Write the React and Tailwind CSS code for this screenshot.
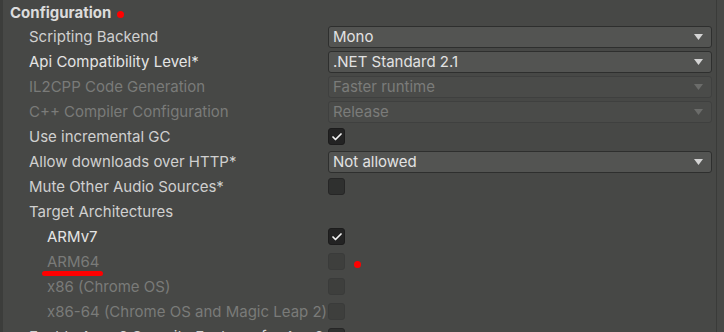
import { Check } from 'lucide-react';

const font = { fontFamily: 'Inter, "Noto Sans", sans-serif' };

const Dropdown = ({ value, disabled }) => (
  <div className={`flex h-[22px] w-[384px] items-center justify-between rounded-[3px] border pl-[4px] pr-[8px] ${disabled ? 'border-[#3f403f] bg-[#4a4b49] text-[#7b7c7a]' : 'border-[#2e2f2e] bg-[#535452] text-[#e2e2e2]'}`}>
    <span className="text-[15px] leading-none">{value}</span>
    <svg width="9" height="6" viewBox="0 0 9 6">
      <path d="M0 0h9L4.5 6z" fill={disabled ? '#6b6c6a' : '#d4d4d4'} />
    </svg>
  </div>
);

const Checkbox = ({ checked, disabled }) => (
  <div className={`flex h-[17px] w-[17px] items-center justify-center rounded-[3px] border ${disabled ? 'border-[#3a3b3a] bg-[#3e3f3d]' : checked ? 'border-[#1c1c1c] bg-[#232323]' : 'border-[#262626] bg-[#2f302f]'}`}>
    {checked && <Check size={12} strokeWidth={3.5} className="text-[#f2f2f2]" />}
  </div>
);

const Row = ({ label, sub, tone = 'normal', children }) => {
  const color = tone === 'disabled' ? 'text-[#7a7b79]' : tone === 'bright' ? 'text-[#e4e4e4]' : 'text-[#d0d0d0]';
  return <div className="flex h-[25px] items-center">
    <div className={`w-[325px] shrink-0 whitespace-nowrap text-[15px] leading-none ${sub ? 'pl-[44px]' : 'pl-[26px]'} ${color}`}>{label}</div>
    {children}
  </div>;
};

export default function App() {
  return <div style={font} className="relative flex h-[332px] w-[724px] overflow-hidden bg-[#474846]">
    <div className="w-[3px] shrink-0 bg-[#3c3d3b]" />
    <div className="flex-1 pt-[2px]">
      <div className="flex h-[22px] items-center pl-[7px] text-[15px] font-bold text-[#dcdcdc]">Configuration</div>
      <Row label="Scripting Backend"><Dropdown value="Mono" /></Row>
      <Row label="Api Compatibility Level*" tone="bright"><Dropdown value=".NET Standard 2.1" /></Row>
      <Row label="IL2CPP Code Generation" tone="disabled"><Dropdown value="Faster runtime" disabled /></Row>
      <Row label="C++ Compiler Configuration" tone="disabled"><Dropdown value="Release" disabled /></Row>
      <Row label="Use incremental GC"><Checkbox checked /></Row>
      <Row label="Allow downloads over HTTP*"><Dropdown value="Not allowed" /></Row>
      <Row label="Mute Other Audio Sources*"><Checkbox /></Row>
      <Row label="Target Architectures" />
      <Row label="ARMv7" sub tone="bright"><Checkbox checked /></Row>
      <Row label="ARM64" sub tone="disabled"><Checkbox disabled /></Row>
      <Row label="x86 (Chrome OS)" sub tone="disabled"><Checkbox disabled /></Row>
      <Row label="x86-64 (Chrome OS and Magic Leap 2)" sub tone="disabled"><Checkbox disabled /></Row>
      <Row label="Enable Armv9 Security Features for Arm64"><Checkbox /></Row>
    </div>
    <div className="w-[8px] shrink-0 border-l border-[#3a3b39]" />
    <div className="absolute left-[117px] top-[11px] h-[7px] w-[7px] rounded-full bg-[#ff0000]" />
    <div className="absolute left-[354px] top-[261px] h-[7px] w-[7px] rounded-full bg-[#ff0000]" />
    <div className="absolute left-[42px] top-[271px] h-[5px] w-[61px] rounded-full bg-[#ff0000]" />
  </div>;
}
